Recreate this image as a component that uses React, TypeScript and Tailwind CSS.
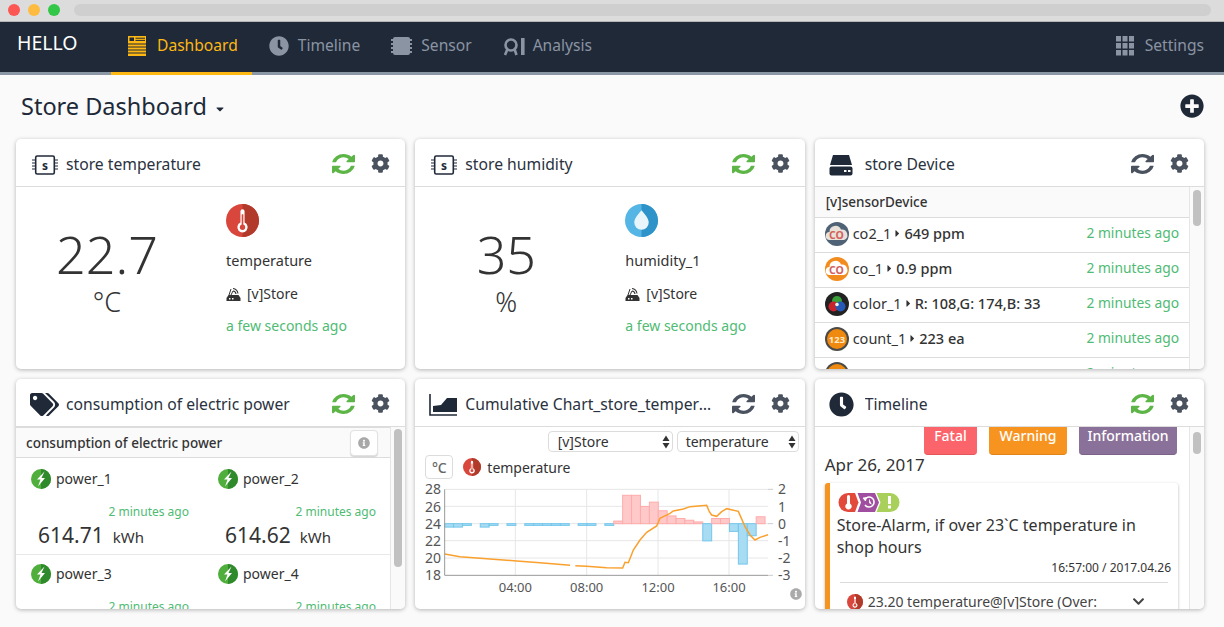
import React from 'react';
import { FaCog, FaTags, FaClock, FaPlusCircle, FaInfoCircle, FaChevronDown, FaCaretDown, FaCaretRight } from 'react-icons/fa';

// chart points are read off a 3x crop whose origin is (420,470); the svg sits at (415,480)
const cx = (x: number) => x / 3 + 5;
const cy = (y: number) => y / 3 - 10;

const barValues = [
  -0.2, -0.2, -0.1, 0, -0.2, -0.1, 0, -0.1, 0, -0.1, -0.1, -0.1, -0.1, -0.1, 0, -0.1, -0.1, 0, -0.1, 0.15, 1.65, 1.65,
  1.0, 1.25, 0.75, 0.45, 0.3, 0.2, 0.1, -1.0, 0.3, 0.3, -0.45, -2.35, -0.7, 0.4,
];

const lineA = [[74, 252], [120, 260], [200, 266], [290, 273], [360, 278], [450, 286]];
const lineB = [
  [466, 287], [500, 289], [560, 293], [608, 294], [615, 277], [625, 278], [640, 240], [660, 210], [680, 187], [710, 168],
  [720, 145], [750, 130], [760, 123], [790, 117], [810, 110], [860, 106], [868, 125], [875, 135], [890, 139], [905, 125],
  [920, 116], [955, 124], [975, 170], [990, 195], [1005, 210], [1020, 202], [1044, 194],
];

const toPoints = (pts: number[][]) => pts.map(([x, y]) => `${cx(x)},${cy(y)}`).join(' ');

// old font-awesome "refresh", the package only has the newer one
const Refresh = ({ className }: { className: string }) => (
  <svg width="23" height="20" viewBox="128 128 1536 1536" preserveAspectRatio="none" fill="currentColor" className={`shrink-0 ${className}`}>
    <path d="M1639 1056q0 5-1 7-64 268-268 434.500t-478 166.500q-146 0-282.500-55t-243.500-157l-129 129q-19 19-45 19t-45-19-19-45v-448q0-26 19-45t45-19h448q26 0 45 19t19 45-19 45l-137 137q71 66 161 102t187 36q134 0 250-65t186-179q11-17 53-117 8-23 30-23h192q13 0 22.500 9.500t9.500 22.500zm25-800v448q0 26-19 45t-45 19h-448q-26 0-45-19t-19-45 19-45l138-138q-148-137-349-137-134 0-250 65t-186 179q-11 17-53 117-8 23-30 23h-199q-13 0-22.500-9.500t-9.500-22.500v-7q65-268 270-434.500t480-166.500q146 0 284 55.500t245 156.500l130-129q19-19 45-19t45 19 19 45z" />
  </svg>
);

const Thermo = ({ size = 33 }: { size?: number }) => (
  <svg width={size} height={size} viewBox="0 0 32 32" className="shrink-0">
    <circle cx="16" cy="16" r="16" fill="#d9463b" />
    <path d="M16 0a16 16 0 0 1 0 32z" fill="#b23a2a" />
    <path d="M14 7a2 2 0 0 1 4 0v11a5 5 0 1 1-4 0z" fill="#fff" />
    <circle cx="16" cy="22.5" r="2.6" fill="#d9463b" />
    <rect x="15.2" y="10" width="1.6" height="11" fill="#d9463b" />
  </svg>
);

const Bolt = () => (
  <svg width="20" height="20" viewBox="0 0 20 20" className="shrink-0">
    <circle cx="10" cy="10" r="10" fill="#4fae3c" />
    <path d="M10 0a10 10 0 0 1 0 20z" fill="#2f8a2c" />
    <path d="M13.500 2.500 6 10.500h3.500L7 17.500l7-8.500h-3.500z" fill="#fff" />
  </svg>
);

const ChipS = () => (
  <svg width="26" height="22" viewBox="0 0 26 22" fill="none" className="ml-[2px] shrink-0">
    <rect x="3.7" y="2" width="18.6" height="18" rx="1.5" stroke="#202938" strokeWidth="1.6" />
    <path d="M0 6h3M0 9h3M0 12h3M0 15h3M23 6h3M23 9h3M23 12h3M23 15h3" stroke="#202938" strokeWidth="1.2" />
    <text x="13" y="15.5" textAnchor="middle" fontSize="12" fontWeight="700" fill="#202938" fontFamily="'Noto Sans', sans-serif">s</text>
  </svg>
);

const Drive = () => (
  <svg width="24" height="22" viewBox="0 0 24 22" className="shrink-0">
    <path d="M4 1h16l3 10H1z" fill="#202938" />
    <rect x="0.5" y="12.5" width="23" height="9" rx="2" fill="#202938" />
    <rect x="15" y="16" width="2.5" height="2" fill="#fff" />
    <rect x="19" y="16" width="2.5" height="2" fill="#fff" />
  </svg>
);

const AreaIcon = () => (
  <svg width="28" height="22" viewBox="0 0 28 22" className="shrink-0">
    <path d="M1 0v21h27" stroke="#202938" strokeWidth="1.6" fill="none" />
    <path d="M4 18v-6l8-1 6-7h10v14z" fill="#202938" />
  </svg>
);

const Router = () => (
  <svg width="15" height="15" viewBox="0 0 15 15" className="shrink-0">
    <path d="M3 8 5 2M5 8l2-4" stroke="#333" strokeWidth="1" fill="none" />
    <path d="M7 1.5a6 6 0 0 1 5 5M7 4a3.5 3.5 0 0 1 3 3" stroke="#333" strokeWidth="1.1" fill="none" />
    <path d="M2.5 8h10l2 3v3H.5v-3z" fill="#333" />
    <rect x="3" y="11" width="1.5" height="1.5" fill="#fff" />
    <rect x="6" y="11" width="1.5" height="1.5" fill="#fff" />
  </svg>
);

const DashIcon = () => (
  <svg width="18" height="20" viewBox="0 0 18 20" className="shrink-0">
    <rect width="18" height="20" fill="#fdb813" />
    <rect x="1.5" y="1.5" width="4.5" height="3.5" fill="#202938" />
    <path d="M7.5 2.200H17M7.5 4.400H17M0 8h18M0 11h18M0 14h18M0 17h18" stroke="#202938" strokeWidth="1" />
  </svg>
);

const SensorNavIcon = () => (
  <svg width="21" height="20" viewBox="0 0 21 20" className="shrink-0">
    <rect x="2" y="1" width="17" height="18" rx="2" fill="#8a94a3" />
    <path d="M0 4h21M0 8h21M0 12h21M0 16h21" stroke="#8a94a3" strokeWidth="2" />
  </svg>
);

const AnalysisIcon = () => (
  <svg width="22" height="19" viewBox="0 0 22 19" className="shrink-0" fill="none">
    <circle cx="8" cy="8" r="5.5" stroke="#8a94a3" strokeWidth="2.6" />
    <path d="M4.5 12 2 18M11.5 12l2 6" stroke="#8a94a3" strokeWidth="2.6" />
    <rect x="18" y="1" width="3.6" height="17" fill="#8a94a3" />
  </svg>
);

const GridIcon = () => (
  <svg width="18" height="20" viewBox="0 0 18 20" className="shrink-0" fill="#8a94a3">
    {[0, 7, 14].map((y) =>
      [0, 6.5, 13].map((x) => <rect key={`${x}-${y}`} x={x} y={y} width="5" height="5.5" />),
    )}
  </svg>
);

const AlarmBadges = () => (
  <svg width="62" height="19" viewBox="0 0 62 19" className="block">
    <path d="M10 0h7l3.500 9.500L17 19h-7a9.500 9.500 0 0 1 0-19z" fill="#e2493a" />
    <path d="M19.500 0H37l4 9.500-4 9.500H19.500l3.500-9.500z" fill="#a04e9f" />
    <path d="M38.500 0H52a9.500 9.500 0 0 1 0 19H38.500l4-9.500z" fill="#a9d05a" />
    <path d="M9 3.500a1.500 1.500 0 0 1 3 0v7a3.200 3.200 0 1 1-3 0z" fill="#fff" />
    <path d="M26.500 7a5 5 0 1 1 .5 5" stroke="#fff" strokeWidth="1.600" fill="none" />
    <path d="M25 5l2.500 3 1-3.500zM31.500 6.500v3.500l2 1" fill="#fff" stroke="#fff" strokeWidth="0.800" />
    <rect x="50" y="3" width="3" height="8" fill="#fff" />
    <rect x="50" y="12.500" width="3" height="3" fill="#fff" />
  </svg>
);

const DeviceIcon = ({ kind }: { kind: string }) => {
  if (kind === 'color') {
    return (
      <svg width="24" height="24" viewBox="0 0 24 24" className="shrink-0">
        <circle cx="12" cy="12" r="12" fill="#222" />
        <circle cx="12" cy="9" r="5" fill="#3aa03a" />
        <circle cx="8.5" cy="14.5" r="5" fill="#c8232c" />
        <circle cx="15.5" cy="14.5" r="5" fill="#2758b5" />
        <circle cx="12" cy="12.5" r="1.8" fill="#eee" />
      </svg>
    );
  }
  if (kind === 'count') {
    return (
      <svg width="24" height="24" viewBox="0 0 24 24" className="shrink-0">
        <circle cx="12" cy="12" r="12" fill="#4a4a48" />
        <circle cx="12" cy="12" r="10" fill="#f0890f" />
        <text x="12" y="15.5" textAnchor="middle" fontSize="9.5" fontWeight="700" fill="#ffe9cc" fontFamily="'Noto Sans', sans-serif">123</text>
      </svg>
    );
  }
  const co2 = kind === 'co2';
  return (
    <svg width="24" height="24" viewBox="0 0 24 24" className="shrink-0">
      <circle cx="12" cy="12" r="12" fill={co2 ? '#4f6276' : '#f28c1e'} />
      <path d="M5 18a4 4 0 0 1-.5-8A6 6 0 0 1 16 7.500a5.500 5.500 0 0 1 3 10.500z" fill={co2 ? '#e8e2d8' : '#fff'} />
      <text x="11.500" y="16.500" textAnchor="middle" fontSize="10.500" fontWeight="700" fill="#d2605c" fontFamily="'Noto Sans', sans-serif">CO</text>
    </svg>
  );
};

const Card = ({ icon, title, synced = true, children }: { icon: React.ReactNode; title: string; synced?: boolean; children: React.ReactNode }) => (
  <div className="relative h-[230px] overflow-hidden rounded-[5px] bg-white shadow-[0_1px_4px_rgba(0,0,0,0.28)]">
    <div className="flex h-[48px] items-center border-b border-[#dcdcdc] pl-[14px] pr-[15px] pt-[4px]">
      <div className="flex w-[36px] shrink-0 items-center">{icon}</div>
      <div className="min-w-0 flex-1 truncate pr-3 pt-[1px] text-[15.7px] text-[#2a3240]">{title}</div>
      <Refresh className={`-mt-[2px] mr-[16px] ${synced ? 'text-[#5db548]' : 'text-[#49525e]'}`} />
      <FaCog className="-mt-[2px] shrink-0 text-[19px] text-[#49525e]" />
    </div>
    {children}
  </div>
);

const SensorBody = ({ value, unit, name, icon }: { value: string; unit: string; name: string; icon: React.ReactNode }) => (
  <div className="flex h-[182px]">
    <div className="flex w-[182px] shrink-0 flex-col items-center pt-[37px] text-[#333]">
      <div className="text-[52px] font-light leading-[60px]">{value}</div>
      <div className="text-[27px] font-light leading-[36px]">{unit}</div>
    </div>
    <div className="ml-[28px] flex flex-col pt-[17px] text-[#333]">
      {icon}
      <div className="mt-[12px] text-[14.5px] leading-[22px]">{name}</div>
      <div className="mt-[12px] flex items-center gap-[6px] text-[14px] leading-[22px]">
        <Router />
        [v]Store
      </div>
      <div className="mt-[10px] text-[14px] leading-[22px] text-[#4fbb74]">a few seconds ago</div>
    </div>
  </div>
);

const Scrollbar = ({ top, height }: { top: string; height: string }) => (
  <div className={`w-[15px] shrink-0 border-l border-[#e6e6e6] bg-[#fafafa] pl-[3px] ${top}`}>
    <div className={`w-[8px] rounded-full bg-[#c1c1c1] ${height}`} />
  </div>
);

const devices = [
  { kind: 'co2', name: 'co2_1', value: '649 ppm' },
  { kind: 'co', name: 'co_1', value: '0.9 ppm' },
  { kind: 'color', name: 'color_1', value: 'R: 108,G: 174,B: 33' },
  { kind: 'count', name: 'count_1', value: '223 ea' },
  { kind: 'count', name: 'countEvent_1', value: '155' },
];

const PowerCell = ({ name, value }: { name: string; value?: string }) => (
  <div className="w-[187px] shrink-0">
    <div className="flex items-center gap-[5px] text-[14px] leading-[20px] text-[#333]">
      <Bolt />
      {name}
    </div>
    <div className="mt-[13px] pr-[29px] text-right text-[12px] leading-[20px] text-[#4fbb74]">2 minutes ago</div>
    {value && (
      <div className="-mt-[1px] ml-[7px] flex items-baseline gap-[9px] leading-[28px] text-[#333]">
        <span className="text-[21px]">{value}</span>
        <span className="text-[15px]">kWh</span>
      </div>
    )}
  </div>
);

const SelectBox = ({ label, className }: { label: string; className: string }) => (
  <div className={`flex h-[21px] items-center justify-between rounded-[4px] border border-[#dcdcdc] pr-[2px] text-[14px] text-[#333] ${className}`}>
    {label}
    <svg width="8" height="14" viewBox="0 0 8 14" fill="#333">
      <path d="M4 0.500 7.500 6H.5zM4 13.500.5 8h7z" />
    </svg>
  </div>
);

const Chart = () => (
  <svg width="390" height="129" viewBox="0 0 390 129" className="mt-[1px] block" fontFamily="'Noto Sans', sans-serif">
    {[58, 109, 161, 212, 264].map((y) => (
      <line key={y} x1={cx(74)} x2={cx(1044)} y1={cy(y)} y2={cy(y)} stroke="#e6e6e6" />
    ))}
    {[286, 500, 714, 927].map((x) => (
      <line key={x} x1={cx(x)} x2={cx(x)} y1={cy(58)} y2={cy(316)} stroke="#e6e6e6" />
    ))}
    {barValues.map((v, i) => {
      if (v === 0) return null;
      const x = cx(74 + 26.7 * i);
      const h = (Math.abs(v) * 51.6) / 3;
      const y = v > 0 ? cy(161) - h : cy(161);
      return (
        <rect key={i} x={x} y={y} width="8.900" height={h} fill={v > 0 ? '#ffc9c9' : '#a8dcf3'} stroke={v > 0 ? '#ffabab' : '#74c7ec'} strokeWidth="1" />
      );
    })}
    <polyline points={toPoints(lineA)} fill="none" stroke="#f9a02e" strokeWidth="1.500" />
    <polyline points={toPoints(lineB)} fill="none" stroke="#f9a02e" strokeWidth="1.500" />
    <path d={`M${cx(74)} ${cy(58)}V${cy(316)}H${cx(1044)}`} fill="none" stroke="#999" />
    <path d={`M${cx(1044)} ${cy(58)}h5M${cx(1044)} ${cy(161)}h5M${cx(1044)} ${cy(316)}h5`} stroke="#ccc" />
    {[28, 26, 24, 22, 20, 18].map((t, i) => (
      <text key={t} x="26" y={cy(58 + i * 51.6) + 5} textAnchor="end" fontSize="14" fill="#555">{t}</text>
    ))}
    {[2, 1, 0, -1, -2, -3].map((t, i) => (
      <text key={t} x="363" y={cy(58 + i * 51.6) + 5} fontSize="14" fill="#555">{t}</text>
    ))}
    {[['04:00', 286], ['08:00', 500], ['12:00', 714], ['16:00', 927]].map(([t, x]) => (
      <text key={t} x={cx(x as number)} y="112" textAnchor="middle" fontSize="13" fill="#555">{t}</text>
    ))}
  </svg>
);

export default function App() {
  return (
    <div className="flex h-[627px] w-[1224px] flex-col overflow-hidden bg-[#fafafa] font-['Noto_Sans',sans-serif]">
      {/* mac window bar */}
      <div className="flex h-[22px] items-center border-b border-[#b5b5b5] bg-[#dcdcdc] pb-[1px] pl-[8px] pr-[13px]">
        <span className="h-[12px] w-[12px] rounded-full bg-[#fc5753]" />
        <span className="ml-[8px] h-[12px] w-[12px] rounded-full bg-[#fdbc40]" />
        <span className="ml-[8px] h-[12px] w-[12px] rounded-full bg-[#33c748]" />
        <div className="ml-[14px] h-[12px] flex-1 rounded-full bg-[#cfcfcf]" />
      </div>

      {/* nav */}
      <div className="flex h-[53px] items-stretch border-b-[3px] border-[#8c97a5] bg-[#202938] pr-[20px]">
        <div className="ml-[17px] w-[60px] pt-[6px] text-[19.5px] text-white">HELLO</div>
        <div className="ml-[34px] -mb-[3px] flex items-center gap-[11px] border-b-[3px] border-[#fdb813] pb-[2px] pl-[17px] pr-[14px] text-[15.6px] text-[#fdb813]">
          <DashIcon />
          Dashboard
        </div>
        <div className="-mb-[3px] flex items-center gap-[9px] pb-[5px] pl-[17px] pr-[14px] text-[15.6px] text-[#8a94a3]">
          <FaClock className="text-[20px]" />
          Timeline
        </div>
        <div className="-mb-[3px] flex items-center gap-[9px] pb-[5px] pl-[17px] pr-[14px] text-[15.6px] text-[#8a94a3]">
          <SensorNavIcon />
          Sensor
        </div>
        <div className="-mb-[3px] flex items-center gap-[8px] pb-[5px] pl-[17px] pr-[14px] text-[15.6px] text-[#8a94a3]">
          <AnalysisIcon />
          Analysis
        </div>
        <div className="ml-auto flex items-center gap-[11px] pb-[2px] text-[15.6px] text-[#8a94a3]">
          <GridIcon />
          Settings
        </div>
      </div>

      {/* page head */}
      <div className="flex h-[64px] items-center justify-between pl-[21px] pr-[20px]">
        <div className="flex items-center gap-[7px] text-[23.5px] text-[#202938]">
          Store Dashboard
          <FaCaretDown className="mt-[3px] text-[12px]" />
        </div>
        <FaPlusCircle className="mb-[3px] text-[24px] text-[#202938]" />
      </div>

      {/* widgets */}
      <div className="grid grid-cols-3 gap-[10px] pl-[16px] pr-[20px]">
        <Card icon={<ChipS />} title="store temperature">
          <SensorBody value="22.7" unit="°C" name="temperature" icon={<Thermo />} />
        </Card>

        <Card icon={<ChipS />} title="store humidity">
          <SensorBody
            value="35"
            unit="%"
            name="humidity_1"
            icon={
              <svg width="33" height="33" viewBox="0 0 32 32">
                <circle cx="16" cy="16" r="16" fill="#55b6e6" />
                <path d="M16 0a16 16 0 0 1 0 32z" fill="#2e93c9" />
                <path d="M16 6c4 5 7 8 7 12a7 7 0 0 1-14 0c0-4 3-7 7-12z" fill="#e8f6fc" />
              </svg>
            }
          />
        </Card>

        <Card icon={<Drive />} title="store Device" synced={false}>
          <div className="flex h-[182px]">
            <div className="min-w-0 flex-1">
              <div className="flex h-[31px] items-center border-b border-[#dcdcdc] bg-[#fafafa] pl-[11px] text-[13.5px] font-medium text-[#333]">
                [v]sensorDevice
              </div>
              {devices.map((d) => (
                <div key={d.name} className="flex h-[35px] items-center border-b border-[#dcdcdc] pb-[3px] pl-[10px] pr-[10px] text-[14.5px] text-[#333]">
                  <DeviceIcon kind={d.kind} />
                  <span className="ml-[4px]">{d.name}</span>
                  <FaCaretRight className="mx-[1px] text-[11px]" />
                  <span className="font-medium">{d.value}</span>
                  <span className="ml-auto text-[13.8px] text-[#4fbb74]">2 minutes ago</span>
                </div>
              ))}
            </div>
            <Scrollbar top="pt-[3px]" height="h-[36px]" />
          </div>
        </Card>

        <Card icon={<FaTags className="text-[29px] text-[#202938]" />} title="consumption of electric power">
          <div className="flex h-[182px]">
            <div className="min-w-0 flex-1">
              <div className="flex h-[31px] items-center justify-between border-y border-[#dcdcdc] bg-[#fafafa] pl-[10px] pr-[12px] text-[13.5px] font-medium text-[#333]">
                <span className="pt-[2px]">consumption of electric power</span>
                <span className="flex h-[26px] w-[28px] items-center justify-center rounded-[4px] border border-[#e2e2e2] bg-white shadow-[0_1px_1px_rgba(0,0,0,0.15)]">
                  <FaInfoCircle className="text-[12px] text-[#a8a8a8]" />
                </span>
              </div>
              <div className="flex h-[97px] border-b border-[#e8e8e8] pl-[15px] pt-[11px]">
                <PowerCell name="power_1" value="614.71" />
                <PowerCell name="power_2" value="614.62" />
              </div>
              <div className="flex pl-[15px] pt-[9px]">
                <PowerCell name="power_3" />
                <PowerCell name="power_4" />
              </div>
            </div>
            <Scrollbar top="pt-[2px]" height="h-[138px]" />
          </div>
        </Card>

        <Card icon={<AreaIcon />} title="Cumulative Chart_store_temperature" synced={false}>
          <div className="flex justify-end gap-[4px] pr-[6px] pt-[4px]">
            <SelectBox label="[v]Store" className="w-[125px] pl-[9px]" />
            <SelectBox label="temperature" className="w-[122px] pl-[8px]" />
          </div>
          <div className="ml-[10px] mt-[3px] flex h-[24px] items-center text-[14px] text-[#333]">
            <span className="flex h-[24px] w-[28px] items-center justify-center rounded-[4px] border border-[#dcdcdc] text-[14px] font-medium text-[#666]">°C</span>
            <span className="ml-[10px]"><Thermo size={18} /></span>
            <span className="ml-[6px]">temperature</span>
          </div>
          <Chart />
          <FaInfoCircle className="absolute bottom-[9px] right-[3px] text-[12px] text-[#aaa]" />
        </Card>

        <Card icon={<FaClock className="text-[25px] text-[#202938]" />} title="Timeline">
          <div className="flex h-[182px]">
            <div className="min-w-0 flex-1 pl-[10px]">
              <div className="flex h-[28px] justify-end gap-[12px] pr-[12px] text-[14px] font-medium text-white">
                <span className="flex w-[53px] items-center justify-center rounded-b-[4px] border-b border-[#e5565c] bg-[#fb646a] pb-[10px]">Fatal</span>
                <span className="flex w-[78px] items-center justify-center rounded-b-[4px] border-b border-[#e0851a] bg-[#f79420] pb-[10px]">Warning</span>
                <span className="flex w-[98px] items-center justify-center rounded-b-[4px] border-b border-[#7a6289] bg-[#8a7199] pb-[10px]">Information</span>
              </div>
              <div className="text-[17px] leading-[20px] text-[#333]">Apr 26, 2017</div>
              <div className="mr-[11px] mt-[8px] h-[200px] rounded-[3px] border-l-[5px] border-[#f79420] bg-white pl-[7px] pr-[7px] pt-[10px] shadow-[0_1px_3px_rgba(0,0,0,0.3)]">
                <div className="pl-[1px]"><AlarmBadges /></div>
                <div className="mt-[2px] text-[16px] leading-[22px] text-[#333]">Store-Alarm, if over 23`C temperature in shop hours</div>
                <div className="text-right text-[12px] leading-[20px] text-[#333]">16:57:00 / 2017.04.26</div>
                <div className="mx-[3px] mt-[4px] flex items-center border-t border-[#dcdcdc] pl-[7px] pt-[8px] text-[14px] text-[#444]">
                  <Thermo size={16} />
                  <span className="ml-[5px] flex-1 truncate">23.20 temperature@[v]Store (Over:</span>
                  <FaChevronDown className="ml-[30px] mr-[23px] shrink-0 text-[13px]" />
                </div>
              </div>
            </div>
            <Scrollbar top="pt-[5px]" height="h-[22px]" />
          </div>
        </Card>
      </div>
    </div>
  );
}
